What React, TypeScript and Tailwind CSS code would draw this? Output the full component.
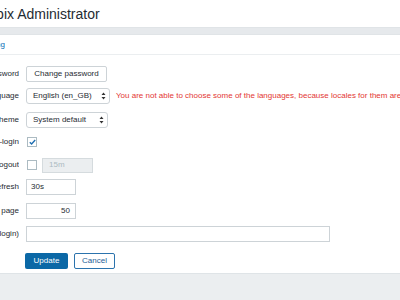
import React from "react"

const font = { fontFamily: '"Liberation Sans", Arial, sans-serif' }

function Label({ text }: { text: string }) {
  return (
    <div className="flex w-[19px] shrink-0 justify-end overflow-hidden whitespace-nowrap text-[8px] text-[#1f2c33]">
      {text}
    </div>
  )
}

function Row({ label, className, children }: { label: string; className?: string; children?: React.ReactNode }) {
  return (
    <div className={"flex h-4 items-center gap-[7px] " + (className ?? "")}>
      <Label text={label} />
      {children}
    </div>
  )
}

function SelectBox({ value, width }: { value: string; width: string }) {
  return (
    <div className={"flex h-4 shrink-0 items-center justify-between whitespace-nowrap rounded-[3px] border border-[#cdd3d7] bg-white pl-[6px] pr-[3px] text-[8px] text-[#1f2c33] " + width}>
      <span>{value}</span>
      <svg width="5" height="8" viewBox="0 0 5 8">
        <path d="M2.5 0.5 L4.5 3 H0.5 Z M2.5 7.5 L4.5 5 H0.5 Z" fill="#333" />
      </svg>
    </div>
  )
}

export default function App() {
  return (
    <div className="h-[300px] w-[400px] overflow-hidden bg-[#ebeef0]" style={font}>
      <div className="flex h-[27px] items-center bg-white">
        <h1 className="ml-[-28px] whitespace-nowrap text-[14px] leading-none text-[#1f2c33]">Zabbix Administrator</h1>
      </div>
      <div className="h-[8px] border-y border-[#e0e4e7] bg-[#e6e9ec]" />
      <div className="bg-white pb-[4px]">
        <div className="flex h-[20px] items-center border-b border-[#ebeef0] pt-[1px]">
          <div className="flex w-[5px] justify-end overflow-hidden whitespace-nowrap text-[8px] text-[#0a6db5]">
            Messaging
          </div>
        </div>
        <div className="flex flex-col pt-[11px]">
          <Row label="Password">
            <button className="h-4 w-[81px] shrink-0 rounded-[2px] border border-[#cdd3d7] bg-white text-[8px] text-[#1f2c33]">
              Change password
            </button>
          </Row>
          <Row label="Language" className="mt-[6px]">
            <SelectBox value="English (en_GB)" width="w-[84px]" />
            <span className="-ml-[1px] whitespace-nowrap text-[8px] text-[#e33734]">
              You are not able to choose some of the languages, because locales for them are not installed on the web server.
            </span>
          </Row>
          <Row label="Theme" className="mt-[8px]">
            <SelectBox value="System default" width="w-[82px]" />
          </Row>
          <Row label="Auto-login" className="mt-[6px]">
            <div className="ml-[1px] flex h-[10px] w-[10px] shrink-0 items-center justify-center border border-[#acbbc2] bg-white">
              <svg width="7" height="6" viewBox="0 0 7 6">
                <path d="M0.8 3.2 L2.6 4.9 L6.2 1" fill="none" stroke="#1f6fb2" strokeWidth="1.4" />
              </svg>
            </div>
          </Row>
          <Row label="Auto-logout" className="mt-[7px]">
            <div className="ml-[1px] h-[10px] w-[10px] shrink-0 border border-[#acbbc2] bg-white" />
            <div className="-ml-[2px] flex h-[15px] w-[51px] shrink-0 items-center border border-[#d5dbde] bg-[#ebeef0] pl-[6px] text-[8px] text-[#acbbc2]">
              15m
            </div>
          </Row>
          <Row label="Refresh" className="mt-[6px]">
            <div className="flex h-4 w-[50px] shrink-0 items-center border border-[#cdd3d7] bg-white pl-[4px] text-[8px] text-[#1f2c33]">
              30s
            </div>
          </Row>
          <Row label="Rows per page" className="mt-[8px]">
            <div className="flex h-4 w-[50px] shrink-0 items-center justify-end border border-[#cdd3d7] bg-white pr-[5px] text-[8px] text-[#1f2c33]">
              50
            </div>
          </Row>
          <Row label="URL (after login)" className="mt-[7px]">
            <div className="h-4 w-[304px] shrink-0 border border-[#cdd3d7] bg-white" />
          </Row>
          <div className="mt-[11px] flex h-4 gap-[6px] pl-[25px]">
            <button className="h-4 w-[43px] rounded-[2px] bg-[#0b68a6] text-[8px] text-white">Update</button>
            <button className="h-4 w-[41px] rounded-[2px] border border-[#2b73ad] bg-white text-[8px] text-[#1d5e95]">
              Cancel
            </button>
          </div>
        </div>
      </div>
      <div className="border-t border-[#dfe4e7]" />
    </div>
  )
}
